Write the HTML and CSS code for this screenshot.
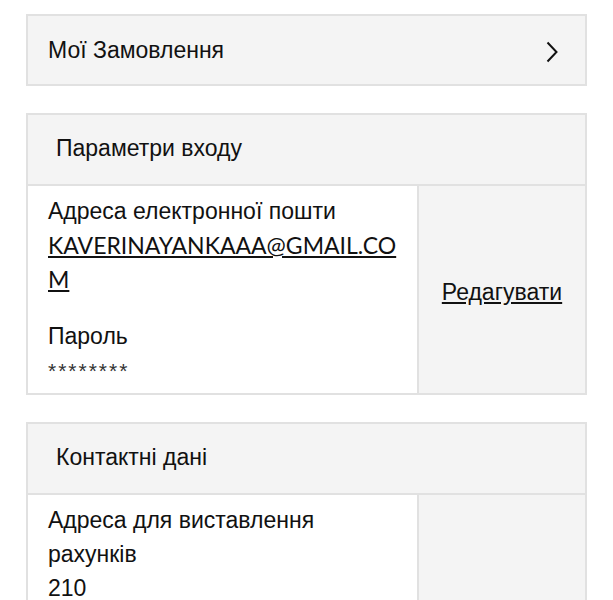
FILE: index.html
```html
<!DOCTYPE html>
<html lang="uk">
<head>
<meta charset="UTF-8" />
<meta name="viewport" content="width=device-width, initial-scale=1" />
<title>Мій профіль</title>
<link rel="stylesheet" href="styles.css">
</head>
<body>
  <div class="profil">

    <a class="carte lien-commandes" href="#">
      <span>Мої Замовлення</span>
      <svg class="chevron" width="12" height="22" viewBox="0 0 12 22" aria-hidden="true">
        <polyline points="1.5,1.5 10.5,11 1.5,20.5" fill="none" stroke="#111" stroke-width="2"/>
      </svg>
    </a>

    <section class="carte">
      <h2 class="carte-titre">Параметри входу</h2>
      <div class="carte-corps">
        <div class="cellule">
          <div class="ligne">Адреса електронної пошти</div>
          <a class="courriel" href="#">KAVERINAYANKAAA@GMAIL.COM</a>
          <div class="ligne mot-passe">Пароль</div>
          <div class="etoiles">********</div>
        </div>
        <div class="action">
          <a href="#">Редагувати</a>
        </div>
      </div>
    </section>

    <section class="carte">
      <h2 class="carte-titre">Контактні дані</h2>
      <div class="carte-corps">
        <div class="cellule">
          <div class="ligne">Адреса для виставлення рахунків</div>
          <div class="ligne">210</div>
        </div>
        <div class="action"></div>
      </div>
    </section>

  </div>
</body>
</html>
```

FILE: styles.css
```css
:root {
  --bordure: #e1e1e1;
  --fond-gris: #f4f4f4;
  --texte: #111;
  --police: 'Liberation Sans', Arial, sans-serif;
}
body {
  margin: 0;
  padding: 14px 26px;
  background: white;
  font-family: var(--police);
  font-size: 23px;
  color: var(--texte);
}
.profil {
  display: flex;
  flex-direction: column;
  gap: 27px;
}
.carte {
  border: 2px solid var(--bordure);
  background: var(--fond-gris);
}
.lien-commandes {
  display: flex;
  justify-content: space-between;
  align-items: center;
  padding: 17px 27px 16px 20px;
  line-height: 35px;
  color: var(--texte);
  text-decoration: none;
}
.chevron {
  display: block;
  margin-top: 2px;
}
.carte-titre {
  margin: 0;
  padding: 16px 28px 19px 28px;
  font-size: 23px;
  font-weight: 400;
  line-height: 34px;
  border-bottom: 2px solid var(--bordure);
}
.carte-corps {
  display: grid;
  grid-template-columns: 391px 1fr;
}
.cellule {
  background: white;
  border-right: 2px solid var(--bordure);
  padding: 8px 19px 10px 20px;
}
.ligne {
  line-height: 34px;
}
.courriel {
  display: block;
  font-family: Lato, var(--police);
  font-size: 23px;
  line-height: 34px;
  color: var(--texte);
  word-break: break-all;
}
.mot-passe {
  margin-top: 23px;
}
.etoiles {
  padding-top: 5px;
  font-size: 21px;
  line-height: 25px;
  letter-spacing: 2px;
  color: #333;
}
.action {
  display: flex;
  align-items: center;
  justify-content: center;
  padding-top: 6px;
}
.action a {
  color: var(--texte);
}
```
